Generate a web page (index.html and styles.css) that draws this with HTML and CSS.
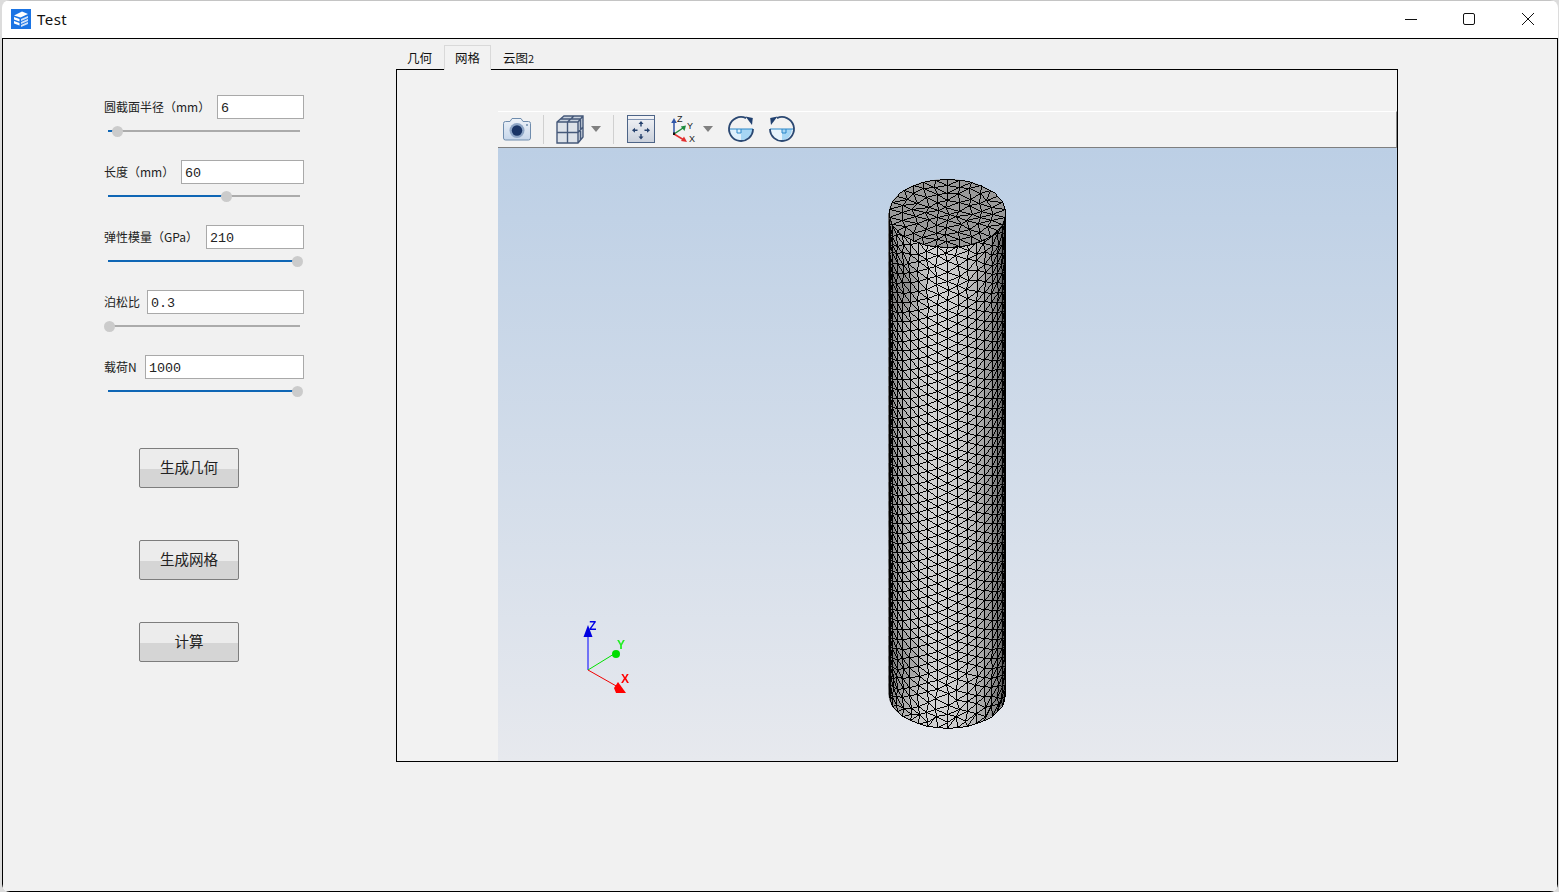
FILE: index.html
```html
<!DOCTYPE html>
<html lang="zh">
<head>
<meta charset="utf-8">
<title>Test</title>
<link rel="stylesheet" href="styles.css">
</head>
<body>
<div class="window">
  <header class="titlebar">
    <svg class="app-icon" width="20" height="20" viewBox="0 0 20 20">
      <rect width="20" height="20" fill="#1b74e4"/>
      <path d="M3 6.5 L11 2.5 L17 5 L9.5 8.5 Z M3 8 L8.5 10 V12.5 L3 10.5 Z M3 12 L8.5 14 V16.5 L3 14.5 Z" fill="#fff"/>
      <path d="M10 10 L17 7 V9 L10 12 Z M10 13 L17 10 V12 L10 15 Z M10 16 L17 13 V15 L10 18 Z" fill="#cfe2fb"/>
    </svg>
    <span class="title">Test</span>
    <div class="controls">
      <button class="ctrl"><svg width="14" height="14" viewBox="0 0 14 14"><path d="M1 7.5H13" stroke="#111" fill="none"/></svg></button>
      <button class="ctrl"><svg width="14" height="14" viewBox="0 0 14 14"><rect x="1.5" y="1.5" width="11" height="11" rx="1.5" stroke="#111" fill="none"/></svg></button>
      <button class="ctrl"><svg width="14" height="14" viewBox="0 0 14 14"><path d="M1 1L13 13M13 1L1 13" stroke="#111" fill="none"/></svg></button>
    </div>
  </header>

  <main class="client">
    <aside class="panel">
      <div class="field">
        <div class="field-row"><label class="field-label">圆截面半径（mm）</label><input class="field-input w-87" value="6"></div>
        <div class="slider"><div class="slider-fill" style="width:4.7%"><span class="thumb"></span></div></div>
      </div>
      <div class="field">
        <div class="field-row"><label class="field-label">长度（mm）</label><input class="field-input w-123" value="60"></div>
        <div class="slider"><div class="slider-fill" style="width:61.5%"><span class="thumb"></span></div></div>
      </div>
      <div class="field">
        <div class="field-row"><label class="field-label">弹性模量（GPa）</label><input class="field-input w-98" value="210"></div>
        <div class="slider"><div class="slider-fill" style="width:98.9%"><span class="thumb"></span></div></div>
      </div>
      <div class="field">
        <div class="field-row"><label class="field-label">泊松比</label><input class="field-input w-157" value="0.3"></div>
        <div class="slider"><div class="slider-fill" style="width:0.8%"><span class="thumb"></span></div></div>
      </div>
      <div class="field">
        <div class="field-row"><label class="field-label">载荷N</label><input class="field-input w-159" value="1000"></div>
        <div class="slider"><div class="slider-fill" style="width:98.9%"><span class="thumb"></span></div></div>
      </div>
      <button class="action first">生成几何</button>
      <button class="action second">生成网格</button>
      <button class="action third">计算</button>
    </aside>

    <section class="tabview">
      <nav class="tabs">
        <span class="tab">几何</span>
        <span class="tab active">网格</span>
        <span class="tab">云图<span class="tab-num">2</span></span>
      </nav>
      <div class="pane">
        <div class="viewer">
          <div class="toolbar">
            <svg class="tool camera" width="30" height="24" viewBox="0 0 30 24">
              <defs><linearGradient id="cam" x1="0" y1="0" x2="0" y2="1"><stop offset="0" stop-color="#eef3f9"/><stop offset="1" stop-color="#c6d6ea"/></linearGradient></defs>
              <path d="M1.5 6.5 Q1.5 4.5 3.5 4.5 H8 L10 1.5 H19 L21 4.5 H26.5 Q28.5 4.5 28.5 6.5 V21 Q28.5 23 26.5 23 H3.5 Q1.5 23 1.5 21 Z" fill="url(#cam)" stroke="#6f8cad"/>
              <circle cx="15" cy="13.5" r="7.5" fill="#8ea6c6"/>
              <circle cx="15" cy="13.5" r="5.2" fill="#1a3566"/>
              <circle cx="25" cy="8" r="1" fill="#6f8cad"/>
            </svg>
            <span class="sep"></span>
            <svg class="tool cube" width="28" height="29" viewBox="0 0 28 29">
              <path d="M1 7 L8 1 H27 V22 L22 28 H1 Z" fill="#c9d2de"/>
              <path d="M1 7 H22 V28 H1 Z" fill="#dde2e9"/>
              <path d="M1 7 L8 1 H27 V22 L22 28 H1 Z M1 7 H22 V28 M22 7 L27 1 M11.5 7 V28 M1 17.5 H22 L27 12 M11.5 7 L18 1 M4.5 4 H24.5 V25" fill="none" stroke="#46597a" stroke-width="1.4"/>
            </svg>
            <span class="caret c1"></span>
            <span class="sep s2"></span>
            <svg class="tool fit" width="28" height="28" viewBox="0 0 28 28">
              <defs><linearGradient id="fit" x1="0" y1="0" x2="0" y2="1"><stop offset="0" stop-color="#f4f5f8"/><stop offset="1" stop-color="#c9d0db"/></linearGradient></defs>
              <rect x="0.5" y="0.5" width="27" height="27" fill="url(#fit)" stroke="#4d6487"/>
              <path d="M1 4.5 H27" stroke="#8094b3"/>
              <path d="M14 11.5 V8 M14 19 V22.5 M10.5 15.2 H7 M17.5 15.2 H21" stroke="#26426e" stroke-width="1.4" fill="none"/>
              <path d="M14 6 L16.5 9 H11.5 Z M14 24.5 L16.5 21.5 H11.5 Z M5 15.2 L8 12.7 V17.7 Z M23 15.2 L20 12.7 V17.7 Z" fill="#26426e"/>
            </svg>
            <svg class="tool triad-icon" width="25" height="30" viewBox="0 0 25 30">
              <path d="M2 20 V7" stroke="#2f55a8" stroke-width="1.5"/>
              <path d="M2 4 L4.8 9 H-0.8 Z" fill="#2f55a8"/>
              <path d="M2 20 L11 14" stroke="#1e8c3c" stroke-width="1.5"/>
              <path d="M14 11.5 L12.5 17 L8.8 12.5 Z" fill="#1e8c3c"/>
              <path d="M2 20 L12 26" stroke="#e23030" stroke-width="1.5"/>
              <path d="M15 28 L9 27 L12 22.5 Z" fill="#e23030"/>
              <path d="M2 18.5 V21" stroke="#111" stroke-width="2"/>
              <text class="ti-text" x="5" y="8">Z</text>
              <text class="ti-text" x="15" y="15">Y</text>
              <text class="ti-text" x="17" y="28">X</text>
            </svg>
            <span class="caret c2"></span>
            <svg class="tool rot r1" width="28" height="28" viewBox="0 0 28 28">
              <path d="M2 14 H26 A12 12 0 0 1 2 14 Z" fill="#dff0fb"/>
              <path d="M14 14 H26 A12 12 0 0 1 14 26 Z" fill="#a6d6f4"/>
              <path d="M2 14 H26 M14 14 V18 H10 V14" fill="none" stroke="#2a87c9"/>
              <path d="M26 14 A12 12 0 1 1 19 3.1" fill="none" stroke="#2b4872" stroke-width="1.8"/>
              <path d="M18.5 1.5 L25.8 3 L25 10 Z" fill="#21406f"/>
            </svg>
            <svg class="tool rot r2" width="28" height="28" viewBox="0 0 28 28">
              <path d="M2 14 H26 A12 12 0 0 1 2 14 Z" fill="#e8f4fc"/>
              <path d="M14 14 H24 A12 12 0 0 1 14 26 Z" fill="#a6d6f4"/>
              <path d="M2 14 H26 M14 14 V18 H18 V14" fill="none" stroke="#2a87c9"/>
              <path d="M2 14 A12 12 0 1 0 9 3.1" fill="none" stroke="#2b4872" stroke-width="1.8"/>
              <path d="M9.5 1.5 L2.2 3 L3 10 Z" fill="#21406f"/>
            </svg>
          </div>
          <div class="scene">
            <canvas id="mesh" class="mesh" width="899" height="613"></canvas>
            <svg class="axes" width="60" height="90" viewBox="0 0 60 90">
              <path d="M10 52 V18" stroke="#0000ff" fill="none"/>
              <path d="M10 52 L36 36" stroke="#00e000" fill="none"/>
              <path d="M10 52 L40 69" stroke="#f00000" fill="none"/>
              <path d="M10 7 L14.5 19 H5.5 Z" fill="#0000e0"/>
              <circle cx="38" cy="36" r="4" fill="#00dd00"/>
              <path d="M36 70 L40 64 L48 75 H38 Z" fill="#ff0000"/>
              <text class="axis-label lz" x="11" y="12">Z</text>
              <text class="axis-label ly" x="39" y="31">Y</text>
              <text class="axis-label lx" x="43" y="65">X</text>
            </svg>
          </div>
        </div>
      </div>
    </section>
  </main>
</div>
<script src="mesh.js"></script>
</body>
</html>
```
FILE: styles.css
```css
* { box-sizing: border-box; }
html, body { margin: 0; height: 100%; }
body {
  background: #dcdcdc;
  overflow: hidden;
  font-family: "Noto Sans CJK SC", "Noto Sans", sans-serif;
  color: #222;
}
.window {
  margin-left: 2px;
  width: 1556px;
  height: 892px;
  background: #fff;
  border-radius: 8px;
  overflow: hidden;
  display: flex;
  flex-direction: column;
}
.titlebar {
  height: 38px;
  flex: none;
  border-top: 1px solid #c4c4c4;
  display: flex;
  align-items: center;
  padding: 0 1px 2px 9px;
}
.app-icon { flex: none; }
.title {
  margin-left: 6px;
  font: 15px "Noto Sans", sans-serif;
  color: #111;
  letter-spacing: 0.45px;
}
.controls { margin-left: auto; display: flex; }
.ctrl {
  width: 58.5px;
  height: 35px;
  padding: 0;
  border: 0;
  background: none;
  display: flex;
  align-items: center;
  justify-content: center;
}
.client {
  flex: 1;
  min-height: 0;
  background: #f1f1f1;
  border: 1px solid #000;
  display: flex;
}
.panel {
  width: 393px;
  flex: none;
  padding: 56px 0 0 101px;
  display: flex;
  flex-direction: column;
  align-items: flex-start;
}
.field { width: 200px; margin-bottom: 28px; }
.field-row { display: flex; align-items: center; height: 24px; }
.field-label { flex: 1; font-size: 12px; line-height: 23px; padding-bottom: 1px; white-space: nowrap; color: #222; }
.field-input {
  height: 24px;
  flex: none;
  border: 1px solid #a9a9a9;
  background: #fff;
  padding: 2px 3px 0;
  font: 13.4px "Liberation Mono", monospace;
  color: #222;
  outline: none;
}
.w-87 { width: 87px; }
.w-123 { width: 123px; }
.w-98 { width: 98px; }
.w-157 { width: 157px; }
.w-159 { width: 159px; }
.slider {
  width: 192px;
  height: 2px;
  margin: 11px 0 0 4px;
  background: #ababab;
}
.slider-fill { position: relative; height: 2px; background: #0f66b5; }
.thumb {
  position: absolute;
  right: -5.5px;
  top: -4.5px;
  width: 11px;
  height: 11px;
  border-radius: 50%;
  background: #cbcbcb;
}
.action {
  width: 100px;
  height: 40px;
  margin-left: 35px;
  padding: 0 0 3px;
  border: 1px solid #7d7d7d;
  border-radius: 2px;
  background: linear-gradient(#ececec 0, #ececec 52%, #d5d5d5 52%, #d5d5d5 100%);
  font-family: inherit;
  font-size: 14.5px;
  color: #222;
}
.first { margin-top: 28px; }
.second { margin-top: 52px; }
.third { margin-top: 42px; }

.tabview {
  width: 1002px;
  flex: none;
  padding-top: 6px;
  display: flex;
  flex-direction: column;
  align-items: stretch;
}
.tabs { display: flex; gap: 1px; height: 24px; position: relative; z-index: 1; }
.tab {
  width: 47px;
  height: 25px;
  padding: 0 0 0 11px;
  font-size: 12.5px;
  line-height: 25px;
  white-space: nowrap;
  color: #111;
}
.tab-num { font-size: 11px; }
.tab.active {
  border: 1px solid #d9d9d9;
  border-bottom: 0;
  background: #f2f2f2;
  padding-left: 10px;
  line-height: 24px;
}
.pane {
  width: 1002px;
  height: 693px;
  border: 1px solid #000;
  background: #f2f2f2;
  padding: 41px 0 0 101px;
  display: flex;
}
.viewer { flex: 1; display: flex; flex-direction: column; }
.toolbar {
  height: 37px;
  flex: none;
  background: #f2f2f2;
  border-top: 1px solid #fff;
  border-bottom: 1px solid #7f7f7f;
  border-right: 1px solid #8c8c8c;
  display: flex;
  align-items: center;
  padding: 0 0 1px 4px;
}
.tool { flex: none; overflow: visible; display: block; }
.sep { width: 1px; height: 29px; background: #d0d0d0; margin-left: 11px; flex: none; }
.cube { margin-left: 12px; }
.caret {
  width: 0;
  height: 0;
  margin-left: 7px;
  border-left: 5.5px solid transparent;
  border-right: 5.5px solid transparent;
  border-top: 6px solid #808080;
  flex: none;
}
.s2 { margin-left: 12px; }
.fit { margin-left: 13px; }
.triad-icon { margin-left: 17px; }
.c2 { margin-left: 6px; }
.r1 { margin-left: 14px; }
.r2 { margin-left: 13px; }
.ti-text { font: 9px "Liberation Sans", sans-serif; fill: #222; }
.scene {
  flex: 1;
  position: relative;
  min-height: 0;
  background: linear-gradient(#bccfe5, #e7e9ee);
}
.mesh { display: block; }
.axes { position: absolute; left: 80px; top: 470px; overflow: visible; }
.axis-label { font: bold 12px "Liberation Sans", sans-serif; }
.lz { fill: #0000e6; }
.ly { fill: #22ee22; }
.lx { fill: #ff0000; }
```
FILE: mesh.js
```js
(function () {
  var canvas = document.getElementById('mesh');
  var ctx = canvas.getContext('2d');
  var OX = 498, OY = 148;
  var CX = 947 - OX, RX = 58.2, RY = 34;
  var TOPY = 213 - OY, BOTY = 694 - OY;
  var ROWS = 50;
  var seed = 12345;
  function rnd() {
    seed = (seed * 16807) % 2147483647;
    return seed / 2147483647 - 0.5;
  }

  function line(a, b) {
    var x0 = Math.round(a.x), y0 = Math.round(a.y);
    var x1 = Math.round(b.x), y1 = Math.round(b.y);
    var dx = Math.abs(x1 - x0), dy = Math.abs(y1 - y0);
    var sx = x0 < x1 ? 1 : -1, sy = y0 < y1 ? 1 : -1;
    var err = dx - dy;
    for (;;) {
      ctx.fillRect(x0, y0, 1, 1);
      if (x0 === x1 && y0 === y1) break;
      var e2 = 2 * err;
      if (e2 > -dy) { err -= dy; x0 += sx; }
      if (e2 < dx) { err += dx; y0 += sy; }
    }
  }

  function tri(a, b, c, shade) {
    ctx.fillStyle = 'rgb(' + shade + ',' + shade + ',' + shade + ')';
    ctx.strokeStyle = ctx.fillStyle;
    ctx.beginPath();
    ctx.moveTo(a.x, a.y);
    ctx.lineTo(b.x, b.y);
    ctx.lineTo(c.x, c.y);
    ctx.closePath();
    ctx.fill();
    ctx.stroke();
  }

  /* --- cylinder side --- */
  var cols = [];
  for (var i = 0; i <= 18; i++) {
    var th = (-90 + i * 10) * Math.PI / 180;
    var levels = [];
    if (i % 2 === 0) {
      for (var l = 0; l <= ROWS; l++) levels.push(l);
    } else {
      levels.push(0);
      for (var m = 0; m < ROWS; m++) levels.push(m + 0.5);
      levels.push(ROWS);
    }
    var pts = levels.map(function (lv) {
      var edge = Math.min(lv, ROWS - lv);
      var amp = (edge > 0 && edge < 8) ? (8 - edge) * 0.55 : 0;
      var jt = amp ? rnd() * amp : 0;
      var ja = amp ? rnd() * amp * 0.02 : 0;
      var t = th + (i > 0 && i < 18 ? ja : 0);
      return {
        x: CX + RX * Math.sin(t),
        y: TOPY + (BOTY - TOPY) * lv / ROWS + jt + RY * Math.cos(t),
        lv: lv,
        th: t
      };
    });
    cols.push(pts);
  }

  function sideShade(a, b, c) {
    var t = (a.th + b.th + c.th) / 3;
    var k = Math.cos(t + 0.12);
    var s = 85 + 125 * Math.pow(Math.max(0, k), 1.2);
    var fx = (a.x + b.x + c.x) / 3 + OX;
    var fy = (a.y + b.y + c.y) / 3 + OY;
    var d1 = Math.hypot((fx - 908) / 26, (fy - 285) / 50);
    var d2 = Math.hypot((fx - 908) / 26, (fy - 665) / 45);
    if (d1 < 1) s -= 40 * (1 - d1);
    if (d2 < 1) s -= 30 * (1 - d2);
    return Math.round(s);
  }

  var edges = [];
  for (var c = 0; c < 18; c++) {
    var A = cols[c], B = cols[c + 1];
    var ia = 0, ib = 0;
    edges.push([A[0], B[0]]);
    while (ia < A.length - 1 || ib < B.length - 1) {
      var advA;
      if (ia === A.length - 1) advA = false;
      else if (ib === B.length - 1) advA = true;
      else advA = A[ia + 1].lv <= B[ib + 1].lv;
      var nxt;
      if (advA) {
        nxt = A[ia + 1];
        tri(A[ia], B[ib], nxt, sideShade(A[ia], B[ib], nxt));
        edges.push([A[ia], nxt]);
        ia++;
      } else {
        nxt = B[ib + 1];
        tri(A[ia], B[ib], nxt, sideShade(A[ia], B[ib], nxt));
        edges.push([B[ib], nxt]);
        ib++;
      }
      edges.push([A[ia], B[ib]]);
    }
  }
  for (var e0 = 0; e0 < cols[18].length - 1; e0++) edges.push([cols[18][e0], cols[18][e0 + 1]]);
  ctx.fillStyle = '#000';
  edges.forEach(function (e) { line(e[0], e[1]); });

  /* --- top cap --- */
  var RINGS = 5;
  var rings = [[{ x: CX + 2, y: TOPY + 1 }]];
  for (var k = 1; k <= RINGS; k++) {
    var n = 6 * k, ring = [];
    for (var q = 0; q < n; q++) {
      var a = q * 2 * Math.PI / n;
      var r = RX * k / RINGS;
      var inner = k < RINGS;
      ring.push({
        x: CX + r * Math.sin(a) + (inner ? rnd() * 4 : 0),
        y: TOPY + r * RY / RX * Math.cos(a) + (inner ? rnd() * 2.5 : 0)
      });
    }
    rings.push(ring);
  }
  ctx.fillStyle = '#9a9a9a';
  ctx.beginPath();
  for (var h = 0; h < 72; h++) {
    var ang = h * Math.PI / 36;
    var hx = CX + RX * Math.sin(ang), hy = TOPY + RY * Math.cos(ang);
    if (h) ctx.lineTo(hx, hy); else ctx.moveTo(hx, hy);
  }
  ctx.closePath();
  ctx.fill();
  ctx.fillStyle = '#000';
  for (var h2 = 0; h2 < 72; h2++) {
    var a1 = h2 * Math.PI / 36, a2 = (h2 + 1) * Math.PI / 36;
    line({ x: CX + RX * Math.sin(a1), y: TOPY + RY * Math.cos(a1) },
         { x: CX + RX * Math.sin(a2), y: TOPY + RY * Math.cos(a2) });
  }
  for (var z = 1; z <= RINGS; z++) {
    var out = rings[z], inn = rings[z - 1];
    for (var w = 0; w < out.length; w++) {
      var pt = out[w], nx = out[(w + 1) % out.length];
      if (z < RINGS) line(pt, nx);
      if (z === 1) { line(pt, inn[0]); continue; }
      var f = w / out.length * inn.length;
      var i0 = Math.floor(f) % inn.length;
      var i1 = Math.ceil(f) % inn.length;
      line(pt, inn[i0]);
      if (i1 !== i0) line(pt, inn[i1]);
    }
  }
})();
```
